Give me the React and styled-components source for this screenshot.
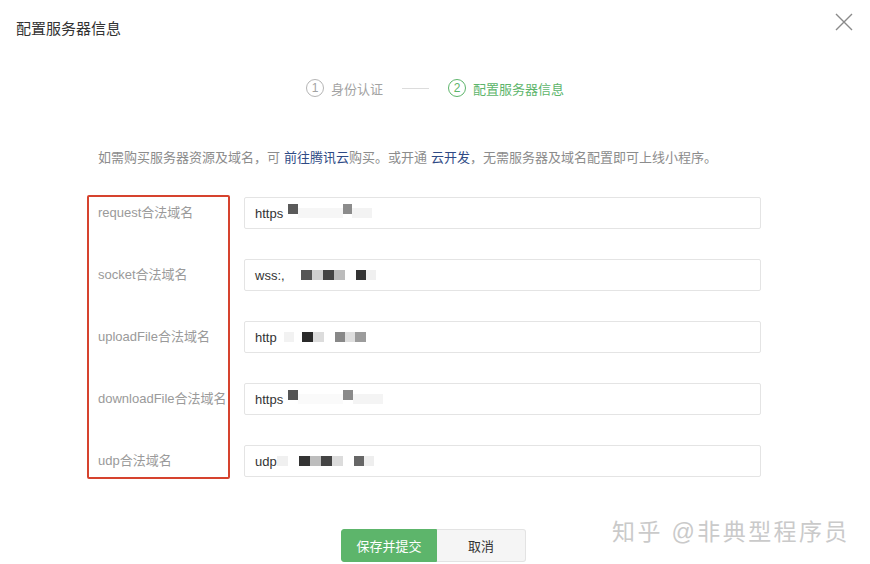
import React from 'react';
import styled, { createGlobalStyle } from 'styled-components';

const GlobalStyle = createGlobalStyle`
  html, body {
    margin: 0;
    padding: 0;
    background: #ffffff;
  }
  body {
    font-family: 'Liberation Sans', 'Noto Sans CJK SC', sans-serif;
  }
`;

const GREEN = '#5db56b';

const Dialog = styled.div`
  position: relative;
  width: 870px;
  height: 564px;
  background: #fff;
  overflow: hidden;
`;

const Header = styled.div`
  display: flex;
  justify-content: space-between;
  align-items: flex-start;
  padding: 13px 17px 0 16px;
`;

const Title = styled.h2`
  margin: 0;
  font-size: 15px;
  font-weight: normal;
  line-height: 32px;
  color: #333;
`;

const CloseButton = styled.button`
  border: 0;
  padding: 0;
  background: none;
  width: 18px;
  height: 18px;
  cursor: pointer;
  line-height: 0;
`;

const Steps = styled.div`
  display: flex;
  justify-content: center;
  align-items: center;
  height: 20px;
  margin-top: 33px;
`;

const Step = styled.div`
  display: flex;
  align-items: center;
  gap: 7px;
  font-size: 13px;
  color: ${(p) => (p.$active ? GREEN : '#a3a3a3')};
`;

const StepNum = styled.span`
  box-sizing: border-box;
  width: 18px;
  height: 18px;
  border-radius: 50%;
  border: 1px solid ${(p) => (p.$active ? GREEN : '#b5b5b5')};
  display: flex;
  align-items: center;
  justify-content: center;
  font-size: 12px;
`;

const StepLine = styled.span`
  width: 27px;
  height: 1px;
  background: #dcdcdc;
  margin: 0 19px;
`;

const Notice = styled.p`
  margin: 50px 0 0 98px;
  font-size: 13px;
  line-height: 20px;
  color: #8c8c8c;
`;

const Link = styled.a`
  color: #2f4a85;
  text-decoration: none;
  margin-left: 4px;
`;

const Form = styled.div`
  display: flex;
  align-items: flex-start;
  margin: 27px 0 0 87px;
`;

const LabelBox = styled.div`
  box-sizing: border-box;
  width: 143px;
  border: 2px solid #d6432e;
  border-radius: 2px;
  display: flex;
  flex-direction: column;
  gap: 30px;
  padding-left: 9px;
`;

const Label = styled.div`
  height: 32px;
  line-height: 32px;
  font-size: 13px;
  color: #9a9a9a;
  white-space: nowrap;
`;

const Fields = styled.div`
  display: flex;
  flex-direction: column;
  gap: 30px;
  padding-top: 2px;
  margin-left: 14px;
`;

const Field = styled.div`
  box-sizing: border-box;
  width: 517px;
  height: 32px;
  border: 1px solid #e4e4e4;
  border-radius: 2px;
  display: flex;
  align-items: center;
  padding-left: 10px;
  font-size: 13px;
  color: #333;
`;

const Pixel = styled.span`
  display: inline-block;
  width: ${(p) => p.$w}px;
  height: 10px;
  margin-left: ${(p) => p.$ml || 0}px;
  margin-top: ${(p) => (p.$up ? -8 : 0)}px;
  background: ${(p) => p.$c};
`;

const Actions = styled.div`
  display: flex;
  justify-content: center;
  margin: 50px 0 0 -3px;
`;

const Button = styled.button`
  box-sizing: border-box;
  height: 33px;
  padding: 0;
  width: ${(p) => (p.$primary ? 96 : 89)}px;
  font-family: inherit;
  font-size: 13px;
  border-radius: 3px;
  border: 1px solid ${(p) => (p.$primary ? GREEN : '#e3e3e3')};
  background: ${(p) => (p.$primary ? GREEN : '#f5f5f5')};
  color: ${(p) => (p.$primary ? '#fff' : '#333')};
  cursor: pointer;
  ${(p) => (p.$primary
    ? 'border-top-right-radius: 0; border-bottom-right-radius: 0;'
    : 'border-top-left-radius: 0; border-bottom-left-radius: 0; border-left: 0;')}
`;

const Watermark = styled.div`
  position: absolute;
  left: 612px;
  top: 513px;
  font-size: 23px;
  letter-spacing: 2.4px;
  color: #cacaca;
  pointer-events: none;
  white-space: nowrap;
`;

const rows = [
  {
    label: 'request合法域名',
    prefix: 'https',
    pixels: [
      { ml: 5, w: 10, c: '#5a5a5a', up: true },
      { ml: 0, w: 45, c: '#f6f6f6' },
      { ml: 0, w: 9, c: '#8c8c8c', up: true },
      { ml: 0, w: 20, c: '#f3f3f3' },
    ],
  },
  {
    label: 'socket合法域名',
    prefix: 'wss:,',
    pixels: [
      { ml: 16, w: 11, c: '#555' },
      { ml: 0, w: 11, c: '#d0d0d0' },
      { ml: 0, w: 11, c: '#444' },
      { ml: 0, w: 11, c: '#bcbcbc' },
      { ml: 11, w: 10, c: '#333' },
      { ml: 0, w: 10, c: '#f0f0f0' },
    ],
  },
  {
    label: 'uploadFile合法域名',
    prefix: 'http',
    pixels: [
      { ml: 7, w: 10, c: '#f2f2f2' },
      { ml: 8, w: 11, c: '#2a2a2a' },
      { ml: 0, w: 11, c: '#dcdcdc' },
      { ml: 11, w: 10, c: '#888' },
      { ml: 0, w: 10, c: '#dedede' },
      { ml: 0, w: 11, c: '#9c9c9c' },
    ],
  },
  {
    label: 'downloadFile合法域名',
    prefix: 'https',
    pixels: [
      { ml: 5, w: 10, c: '#555', up: true },
      { ml: 0, w: 45, c: '#fafafa' },
      { ml: 0, w: 10, c: '#8a8a8a', up: true },
      { ml: 0, w: 30, c: '#f4f4f4' },
    ],
  },
  {
    label: 'udp合法域名',
    prefix: 'udp',
    pixels: [
      { ml: 0, w: 11, c: '#f0f0f0' },
      { ml: 11, w: 11, c: '#333' },
      { ml: 0, w: 11, c: '#bdbdbd' },
      { ml: 0, w: 11, c: '#444' },
      { ml: 0, w: 11, c: '#dcdcdc' },
      { ml: 11, w: 10, c: '#666' },
      { ml: 0, w: 10, c: '#eee' },
    ],
  },
];

const CloseIcon = () => (
  <svg width="18" height="18" viewBox="0 0 18 18">
    <path d="M1 1 L17 17 M17 1 L1 17" stroke="#8a8a8a" strokeWidth="1.4" fill="none" />
  </svg>
);

export default function App() {
  return (
    <Dialog>
      <GlobalStyle />
      <Header>
        <Title>配置服务器信息</Title>
        <CloseButton aria-label="关闭"><CloseIcon /></CloseButton>
      </Header>

      <Steps>
        <Step>
          <StepNum>1</StepNum>
          身份认证
        </Step>
        <StepLine />
        <Step $active>
          <StepNum $active>2</StepNum>
          配置服务器信息
        </Step>
      </Steps>

      <Notice>
        如需购买服务器资源及域名，可<Link href="#">前往腾讯云</Link>购买。或开通<Link href="#">云开发</Link>，无需服务器及域名配置即可上线小程序。
      </Notice>

      <Form>
        <LabelBox>
          {rows.map((r) => (
            <Label key={r.label}>{r.label}</Label>
          ))}
        </LabelBox>
        <Fields>
          {rows.map((r) => (
            <Field key={r.label}>
              {r.prefix}
              {r.pixels.map((p, i) => (
                <Pixel key={i} $w={p.w} $ml={p.ml} $c={p.c} $up={p.up} />
              ))}
            </Field>
          ))}
        </Fields>
      </Form>

      <Actions>
        <Button $primary>保存并提交</Button>
        <Button>取消</Button>
      </Actions>

      <Watermark>知乎 @非典型程序员</Watermark>
    </Dialog>
  );
}
